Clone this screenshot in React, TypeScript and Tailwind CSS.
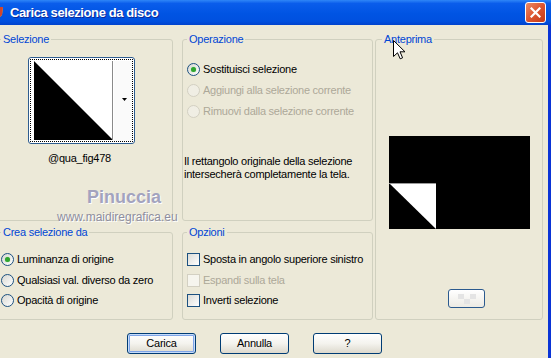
import type { ReactNode } from "react";

function Group({
  title,
  className = "",
  legendClass = "ml-[4px]",
  children,
}: {
  title: string;
  className?: string;
  legendClass?: string;
  children?: ReactNode;
}) {
  return (
    <fieldset className={`min-w-0 rounded-[3px] border border-[#D0D0BF] ${className}`}>
      <legend className={`px-[2px] leading-[13px] text-[#0046D5] ${legendClass}`}>{title}</legend>
      {children}
    </fieldset>
  );
}

function Radio({ checked, disabled }: { checked?: boolean; disabled?: boolean }) {
  return (
    <span
      className={`flex h-[13px] w-[13px] shrink-0 items-center justify-center rounded-full border ${
        disabled ? "border-[#D3D0C2] bg-[#F0EEE4]" : "border-[#1C5180] bg-linear-to-br from-[#D8D8D2] to-white"
      }`}
    >
      {checked && <span className="h-[5px] w-[5px] rounded-full bg-[#2FA52F] shadow-[0_0_1px_#7ED37E]" />}
    </span>
  );
}

function Check({ disabled }: { disabled?: boolean }) {
  return (
    <span
      className={`h-[13px] w-[13px] shrink-0 border ${
        disabled ? "border-[#D3D0C2] bg-[#F6F5EE]" : "border-[#1C5180] bg-linear-to-br from-[#DCDCD7] to-white"
      }`}
    />
  );
}

function Row({ h, children, off }: { h: string; children: ReactNode; off?: boolean }) {
  return (
    <div className={`flex items-center gap-[3px] ${h} ${off ? "text-[#ACA899]" : "text-black"}`}>{children}</div>
  );
}

function Btn({ children, def }: { children: ReactNode; def?: boolean }) {
  return (
    <button
      className={`h-[21px] w-[69px] rounded-[3px] border border-[#003C74] bg-linear-to-b from-white via-[#F4F3EE] to-[#DDD9CD] leading-none text-black ${
        def ? "shadow-[inset_0_0_0_1px_#C6DCFA,inset_0_0_0_2px_#7FA5E8]" : ""
      }`}
    >
      {children}
    </button>
  );
}

export default function App() {
  return (
    <div className="relative flex h-[358px] w-[551px] flex-col overflow-hidden bg-[#ECE9D8] font-['Liberation_Sans',Arial,sans-serif] text-[11px] tracking-[-0.25px]">
      {/* title bar */}
      <div className="flex h-[25px] shrink-0 items-center bg-[linear-gradient(to_bottom,#2F86F7_0%,#0A5DEB_14%,#0054E3_55%,#0050DF_85%,#0143CD_100%)]">
        <svg width="16" height="16" viewBox="0 0 16 16" className="-ml-[11px] shrink-0">
          <path d="M2 2h12l-1 8-5 5-5-5z" fill="#E8C23A" />
          <path d="M8 2h6l-1 8-5 5z" fill="#D4442A" />
          <path d="M3 4h5v9l-4-4z" fill="#3C9B3C" />
        </svg>
        <span className="ml-[5px] text-[13px] font-bold tracking-[-0.4px] text-white [text-shadow:1px_1px_0_#0A2A9A]">
          Carica selezione da disco
        </span>
        <div className="ml-auto mr-[5px] flex h-[21px] w-[21px] items-center justify-center rounded-[3px] border border-white bg-linear-to-br from-[#E98A66] via-[#DD5530] to-[#C23A18]">
          <svg width="11" height="11" viewBox="0 0 11 11">
            <path d="M1.5 1.5l8 8M9.5 1.5l-8 8" stroke="white" strokeWidth="2.2" strokeLinecap="square" />
          </svg>
        </div>
      </div>

      {/* body */}
      <div className="flex flex-1 flex-col border-r-[3px] border-[#0A34D6] pt-[8px]">
        <div className="flex">
          {/* left column */}
          <div className="-ml-[4px] flex w-[177px] shrink-0 flex-col">
            <Group title="Selezione" className="h-[188px]">
              <div className="ml-[31px] mt-[11px] h-[87px] w-[107px] rounded-[3px] border border-[#2E5C8F] bg-white p-px">
                <div className="flex h-full border border-dotted border-black pl-[3px] pt-px">
                  <svg width="80" height="79" viewBox="0 0 80 79" className="shrink-0">
                    <rect width="80" height="79" fill="white" />
                    <polygon points="0,0 79,79 0,79" fill="black" />
                    <rect x="78" y="0" width="1" height="79" fill="#8A8A8A" />
                  </svg>
                  <div className="flex flex-1 items-center justify-center bg-[#FAFAFA] pb-[4px]">
                    <svg width="5" height="3" viewBox="0 0 5 3" className="ml-[3px]">
                      <polygon points="0,0 5,0 2.5,3" fill="black" />
                    </svg>
                  </div>
                </div>
              </div>
              <div className="ml-[29px] mt-[8px] w-[107px] text-center leading-[13px] text-black">@qua_fig478</div>
            </Group>
            <Group title="Crea selezione da" className="mt-[5px] h-[94px]">
              <div className="ml-[4px] mt-[9px] flex flex-col">
                <Row h="h-[22px]">
                  <Radio checked />
                  <span>Luminanza di origine</span>
                </Row>
                <Row h="h-[20px]">
                  <Radio />
                  <span>Qualsiasi val. diverso da zero</span>
                </Row>
                <Row h="h-[20px]">
                  <Radio />
                  <span>Opacità di origine</span>
                </Row>
              </div>
            </Group>
          </div>

          {/* middle column */}
          <div className="ml-[9px] flex w-[191px] shrink-0 flex-col">
            <Group title="Operazione" className="h-[188px]">
              <div className="ml-[4px] mt-[12px] flex flex-col">
                <Row h="h-[22px]">
                  <Radio checked />
                  <span>Sostituisci selezione</span>
                </Row>
                <Row h="h-[21px]" off>
                  <Radio disabled />
                  <span>Aggiungi alla selezione corrente</span>
                </Row>
                <Row h="h-[21px]" off>
                  <Radio disabled />
                  <span>Rimuovi dalla selezione corrente</span>
                </Row>
              </div>
              <p className="ml-px mt-[33px] leading-[13px] text-black">
                Il rettangolo originale della selezione
                <br />
                intersecherà completamente la tela.
              </p>
            </Group>
            <Group title="Opzioni" className="mt-[5px] h-[94px]">
              <div className="ml-[4px] mt-[9px] flex flex-col">
                <Row h="h-[22px]">
                  <Check />
                  <span>Sposta in angolo superiore sinistro</span>
                </Row>
                <Row h="h-[20px]" off>
                  <Check disabled />
                  <span>Espandi sulla tela</span>
                </Row>
                <Row h="h-[20px]">
                  <Check />
                  <span>Inverti selezione</span>
                </Row>
              </div>
            </Group>
          </div>

          {/* right column */}
          <div className="ml-[2px] flex w-[168px] shrink-0 flex-col">
            <Group title="Anteprima" className="h-[287px]" legendClass="ml-[6px]">
              <svg width="141" height="93" viewBox="0 0 141 93" className="mx-auto mt-[90px] block">
                <rect width="141" height="93" fill="black" />
                <polygon points="0,47 47,47 47,93" fill="white" />
                <rect x="0" y="47" width="47" height="1" fill="#9A9A9A" />
              </svg>
              <div className="ml-[72px] mt-[60px] flex h-[19px] w-[37px] items-center justify-center rounded-[3px] border border-[#2B5A8E] bg-linear-to-b from-white to-[#EDEBE4]">
                <svg width="18" height="10" viewBox="0 0 18 10">
                  <rect x="0" y="0" width="6" height="5" fill="#E4E4E4" />
                  <rect x="12" y="0" width="6" height="5" fill="#E4E4E4" />
                  <rect x="6" y="5" width="6" height="5" fill="#E4E4E4" />
                </svg>
              </div>
            </Group>
          </div>
        </div>

        {/* buttons */}
        <div className="ml-[127px] mt-[13px] flex gap-[24px]">
          <Btn def>Carica</Btn>
          <Btn>Annulla</Btn>
          <Btn>?</Btn>
        </div>
      </div>

      {/* watermark */}
      <div className="absolute left-[87px] top-[188px] text-[18px] font-bold leading-[18px] tracking-normal text-[#A3A3BE] [text-shadow:1px_1px_0_#FFFFFF]">
        Pinuccia
      </div>
      <div className="absolute left-[57px] top-[211px] text-[12px] leading-[12px] tracking-normal text-[#8E8E9E] [text-shadow:1px_1px_0_#FFFFFF]">
        www.maidiregrafica.eu
      </div>

      {/* mouse cursor */}
      <svg width="13" height="20" viewBox="0 0 13 20" className="absolute left-[393px] top-[40px]">
        <path d="M0.5 0.5V16.5L4.5 12.8L7.2 18.8L9.6 17.8L7 11.8H12Z" fill="white" stroke="black" strokeWidth="1" />
      </svg>
    </div>
  );
}
